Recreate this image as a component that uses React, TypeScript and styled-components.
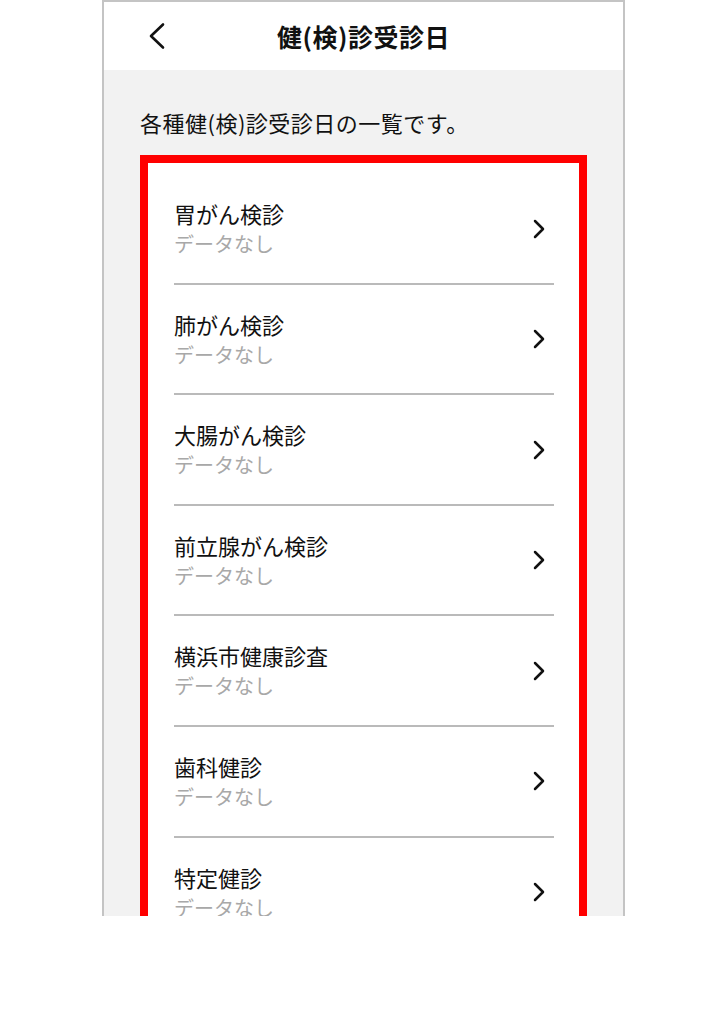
import React from 'react';
import styled, { createGlobalStyle } from 'styled-components';

interface CheckupItem {
  name: string;
  date: string;
}

const GlobalStyle = createGlobalStyle`
  html, body {
    margin: 0;
    padding: 0;
    background: #ffffff;
  }

  body {
    font-family: 'Noto Sans CJK JP', 'Noto Sans', sans-serif;
    color: #111;
  }

  * {
    box-sizing: border-box;
  }
`;

const Page = styled.div`
  padding-left: 102px;
  height: 1028px;
`;

const Screen = styled.div`
  width: 523px;
  height: 916px;
  overflow: hidden;
  border: 2px solid #c4c4c4;
  border-bottom: none;
  background: #f2f2f2;
`;

const Header = styled.header`
  height: 68px;
  background: #ffffff;
  display: flex;
  align-items: center;
`;

const BackButton = styled.button`
  width: 80px;
  height: 68px;
  padding: 0 0 0 44px;
  border: none;
  background: none;
  display: flex;
  align-items: center;
  cursor: pointer;
`;

const Title = styled.h1`
  flex: 1;
  margin: 0;
  text-align: center;
  font-size: 25px;
  font-weight: 700;
  line-height: 32px;
  letter-spacing: 0.5px;
  color: #111;
`;

const HeaderSpacer = styled.div`
  width: 80px;
`;

const Body = styled.main`
  padding: 36px 36px 0;
`;

const Intro = styled.p`
  margin: 0 0 16px;
  font-size: 22px;
  line-height: 33px;
  letter-spacing: 0.5px;
  color: #111;
`;

const ListCard = styled.ul`
  list-style: none;
  margin: 0;
  padding: 11px 25px 0 26px;
  background: #ffffff;
  border: 8px solid #ff0000;
`;

const Row = styled.li`
  display: flex;
  align-items: center;
  padding: 25px 0 24.6px;
  border-bottom: 2px solid #bababa;
  cursor: pointer;
`;

const RowText = styled.div`
  flex: 1;
  display: flex;
  flex-direction: column;
`;

const RowName = styled.span`
  font-size: 22px;
  line-height: 28px;
  color: #111;
`;

const RowDate = styled.span`
  margin-top: 3px;
  font-size: 20px;
  line-height: 28px;
  color: #a8a8a8;
`;

const Chevron = styled.svg`
  flex-shrink: 0;
  margin-right: 9px;
`;

const BackIcon = () => (
  <svg width="18" height="28" viewBox="0 0 18 28" fill="none">
    <polyline
      points="15,2.5 3,14 15,25.5"
      stroke="#111"
      strokeWidth="2.6"
      strokeLinecap="round"
      strokeLinejoin="round"
    />
  </svg>
);

const RowChevron = () => (
  <Chevron width="12" height="20" viewBox="0 0 12 20" fill="none">
    <polyline
      points="2,2 10,10 2,18"
      stroke="#111"
      strokeWidth="2.5"
      strokeLinecap="round"
      strokeLinejoin="round"
    />
  </Chevron>
);

const App: React.FC = () => {
  const items: CheckupItem[] = [
    { name: '胃がん検診', date: 'データなし' },
    { name: '肺がん検診', date: 'データなし' },
    { name: '大腸がん検診', date: 'データなし' },
    { name: '前立腺がん検診', date: 'データなし' },
    { name: '横浜市健康診査', date: 'データなし' },
    { name: '歯科健診', date: 'データなし' },
    { name: '特定健診', date: 'データなし' },
  ];

  return (
    <>
      <GlobalStyle />
      <Page>
        <Screen>
          <Header>
            <BackButton aria-label="戻る">
              <BackIcon />
            </BackButton>
            <Title>健(検)診受診日</Title>
            <HeaderSpacer />
          </Header>
          <Body>
            <Intro>各種健(検)診受診日の一覧です。</Intro>
            <ListCard>
              {items.map((item, index) => (
                <Row key={index}>
                  <RowText>
                    <RowName>{item.name}</RowName>
                    <RowDate>{item.date}</RowDate>
                  </RowText>
                  <RowChevron />
                </Row>
              ))}
            </ListCard>
          </Body>
        </Screen>
      </Page>
    </>
  );
};

export default App;
